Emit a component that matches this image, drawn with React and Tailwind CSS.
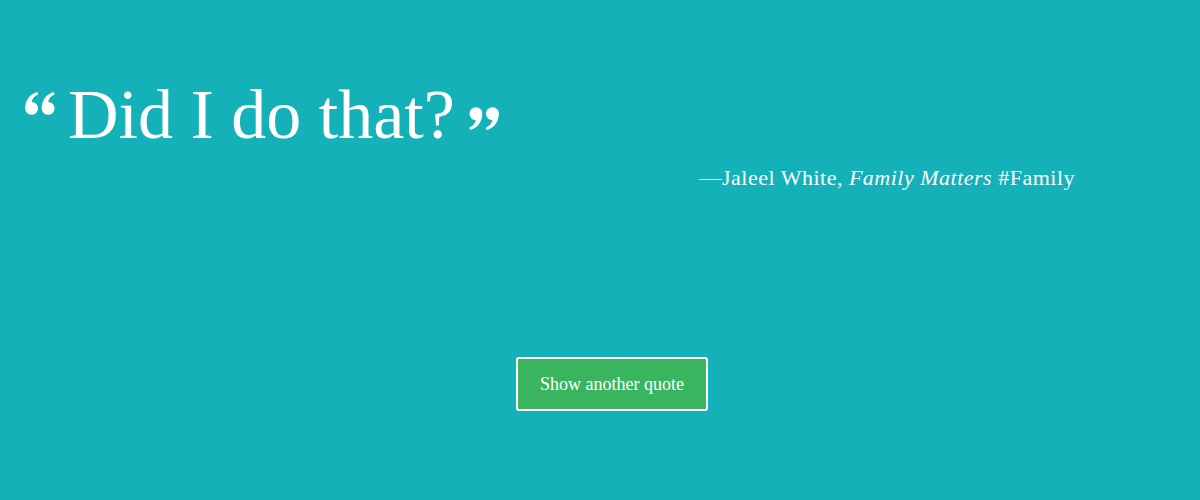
import React from "react";

function Marks() {
  return (
    <>
      <circle cx="6.6" cy="16.4" r="6.4" />
      <path d="M0.3,17 C0,8.5 4.5,2.2 12.3,0 L13.2,2.2 C8.4,4.6 6.4,8 6.8,11.5 Z" />
      <circle cx="23.1" cy="16.4" r="6.4" />
      <path d="M16.8,17 C16.5,8.5 21,2.2 28.8,0 L29.7,2.2 C24.9,4.6 22.9,8 23.3,11.5 Z" />
    </>
  );
}

function OpenQuote({ className }) {
  return (
    <svg className={className} viewBox="0 0 30 23" fill="white">
      <Marks />
    </svg>
  );
}

function CloseQuote({ className }) {
  return (
    <svg className={className} viewBox="0 0 30 23" fill="white">
      <g transform="rotate(180 15 11.5)">
        <Marks />
      </g>
    </svg>
  );
}

export default function App() {
  return (
    <div
      className="w-[1200px] h-[500px] bg-[#15b1b9] text-white flex flex-col"
      style={{ fontFamily: '"Liberation Serif", "DejaVu Serif", serif' }}
    >
      <div className="pt-[75px] pl-[25px] flex items-start">
        <OpenQuote className="w-[30px] h-[23px] mt-[17px]" />
        <h1 className="ml-[13px] text-[70px] leading-[80px] font-normal">Did I do that?</h1>
        <CloseQuote className="w-[30px] h-[23px] mt-[32px] ml-[14px]" />
      </div>
      <div className="pr-[125px] mt-[9px] flex justify-end text-[22px] leading-[28px] tracking-[0.5px]">
        <span>
          —Jaleel White, <i>Family Matters</i> #Family
        </span>
      </div>
      <div className="mt-[165px] flex justify-center pl-[24px]">
        <button className="w-[192px] h-[54px] bg-[#3ab55f] border-2 border-white rounded-[3px] text-[18px] text-white">
          Show another quote
        </button>
      </div>
    </div>
  );
}
